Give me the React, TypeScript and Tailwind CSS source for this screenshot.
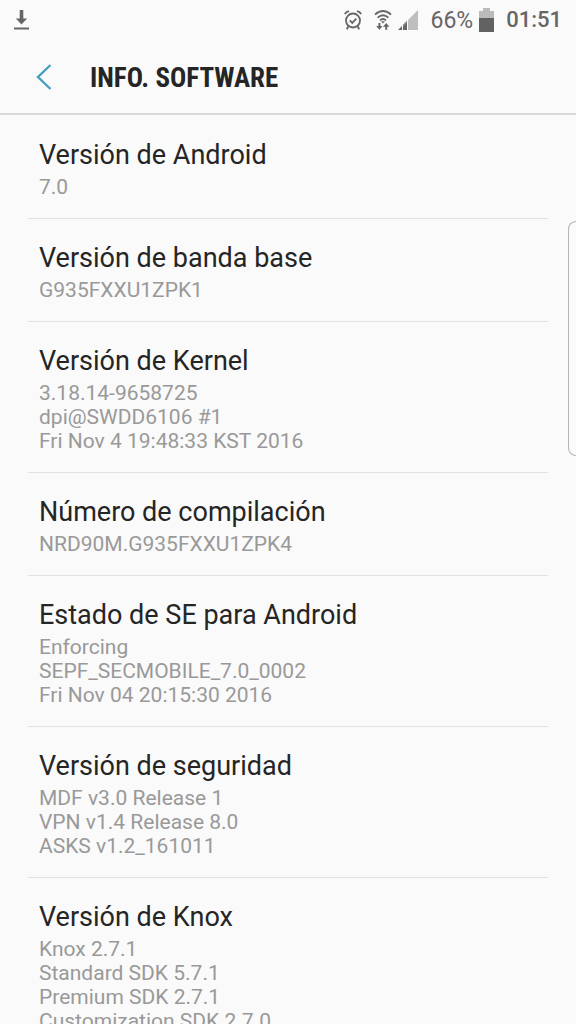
// Software information screen: status bar, header and the list of versions

const items = [
  { title: 'Versión de Android', lines: ['7.0'] },
  { title: 'Versión de banda base', lines: ['G935FXXU1ZPK1'] },
  {
    title: 'Versión de Kernel',
    lines: ['3.18.14-9658725', 'dpi@SWDD6106 #1', 'Fri Nov 4 19:48:33 KST 2016'],
  },
  { title: 'Número de compilación', lines: ['NRD90M.G935FXXU1ZPK4'] },
  {
    title: 'Estado de SE para Android',
    lines: ['Enforcing', 'SEPF_SECMOBILE_7.0_0002', 'Fri Nov 04 20:15:30 2016'],
  },
  {
    title: 'Versión de seguridad',
    lines: ['MDF v3.0 Release 1', 'VPN v1.4 Release 8.0', 'ASKS v1.2_161011'],
  },
  {
    title: 'Versión de Knox',
    lines: ['Knox 2.7.1', 'Standard SDK 5.7.1', 'Premium SDK 2.7.1', 'Customization SDK 2.7.0'],
  },
];

function DownloadIcon() {
  return (
    <svg width="16" height="21" viewBox="0 0 16 21" fill="#666" aria-hidden="true">
      <path d="M5.7 0h3.6v8.5h3.9L7.5 14.5 1.8 8.5h3.9z" />
      <path d="M0 17.5h15v2H0z" />
    </svg>
  );
}

function AlarmIcon() {
  return (
    <svg width="18" height="20" viewBox="0 0 18 20" fill="none" stroke="#666" strokeWidth="1.8" aria-hidden="true">
      <circle cx="9" cy="10.5" r="7" />
      <path d="M5.7 10.3l2.6 2.6 4-4.2M.8 4.2Q1.8 1.8 5 1.1M17.2 4.2Q16.2 1.8 13 1.1M4.4 16.3l-1.6 2.9M13.6 16.3l1.6 2.9" />
    </svg>
  );
}

function WifiIcon() {
  return (
    <svg width="18" height="20" viewBox="0 0 18 20" fill="none" stroke="#666" strokeWidth="1.9" aria-hidden="true">
      <path d="M1 4.6Q9-2.4 17 4.6M3.6 7.6Q9 2.8 14.4 7.6M6 10.4Q9 7.6 12 10.4" />
      <path d="M7 11.2h4l-2 2.2z" fill="#666" stroke="none" />
      <path d="M4.4 13h2v3h2.2l-3.2 3.7L2.2 16h2.2zM11.2 19.7v-3H9L12.2 13l3.2 3.7h-2.2v3z" fill="#666" stroke="none" />
    </svg>
  );
}

function SignalIcon() {
  return (
    <svg width="20" height="20" viewBox="0 0 20 20" aria-hidden="true">
      <path d="M0 20L4 16v4zM5 20v-5l4-4v9z" fill="#666" />
      <path d="M5 15l4-4v2l-4 4z" fill="#888" />
      <path d="M10 20V10L20 0v20z" fill="#bebebe" />
    </svg>
  );
}

function BatteryIcon() {
  return (
    <svg width="15" height="24" viewBox="0 0 15 24" aria-hidden="true">
      <path d="M4 0h7v3h4v7H0V3h4z" fill="#bbb" />
      <path d="M0 10h15v14H0z" fill="#626262" />
    </svg>
  );
}

function StatusBar() {
  return (
    <div className="flex h-10 shrink-0 items-center justify-between px-3.5 text-[#666]">
      <DownloadIcon />
      <div className="flex items-center">
        <AlarmIcon />
        <span className="ml-3">
          <WifiIcon />
        </span>
        <span className="ml-1.5">
          <SignalIcon />
        </span>
        <span className="ml-3 text-[23px] leading-none">66%</span>
        <span className="ml-1.5">
          <BatteryIcon />
        </span>
        <span className="ml-3 text-[22px] font-medium leading-none">01:51</span>
      </div>
    </div>
  );
}

export default function App() {
  return (
    <div className="relative flex h-screen flex-col overflow-hidden bg-[#fafafa] font-['Roboto',sans-serif]">
      <StatusBar />

      <header className="flex h-[75px] shrink-0 items-center border-b-2 border-[#d9d9d9] pl-9">
        <button type="button" aria-label="Atrás" className="flex">
          <svg width="16" height="28" viewBox="0 0 16 28" fill="none" stroke="#469fc3" strokeWidth="2.4">
            <path d="M14.5 2L2 14l12.5 12" />
          </svg>
        </button>
        <h1 className="ml-[38px] pt-1 font-['Roboto_Condensed','Roboto',sans-serif] text-[27px] font-bold text-[#252525]">
          INFO. SOFTWARE
        </h1>
      </header>

      <main className="min-h-0 flex-1 overflow-hidden px-7 pt-px">
        {items.map((item) => (
          <section key={item.title} className="border-b border-[#e2e2e2] px-[11px] pb-[19px] pt-[22px]">
            <h2 className="text-[27px] leading-[35px] text-[#252525]">{item.title}</h2>
            <div className="mt-0.5 text-[21px] leading-6 text-[#999]">
              {item.lines.map((line) => (
                <p key={line}>{line}</p>
              ))}
            </div>
          </section>
        ))}
      </main>

      {/* Edge panel handle */}
      <div className="absolute right-0 top-[221px] h-[235px] w-2 rounded-l-lg border border-r-0 border-[#b5b5b5]" />
    </div>
  );
}
